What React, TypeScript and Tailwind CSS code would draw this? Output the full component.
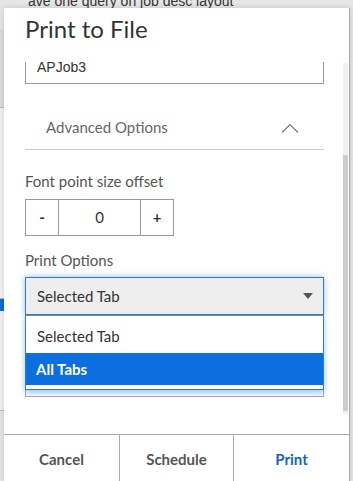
import { useEffect, useRef } from "react";

const font = "font-['Source_Sans_Pro','Lato','Noto_Sans',sans-serif]";

function Background() {
  return (
    <div className="absolute inset-0 overflow-hidden bg-[#e6e6e6]">
      <div className="-mt-[7px] pl-[28px] font-['Liberation_Sans',sans-serif] text-[14px] leading-[16px] text-[#333]">
        ave one query on job desc layout
      </div>
      <div className="mt-[20px] flex w-[4px] flex-col">
        <div className="h-[78px] bg-[#dcdcdc]" />
        <div className="h-[192px] border-y border-[#bbb] bg-[#f2f2f2]" />
        <div className="h-[12px] bg-[#0a6fde]" />
        <div className="h-[100px] border-b border-[#bbb] bg-[#f2f2f2]" />
      </div>
    </div>
  );
}

function Stepper() {
  return (
    <div className="flex h-[37px] w-[149px] border border-[#999] text-[15px] text-[#333]">
      <div className="flex w-[33px] items-center justify-center border-r border-[#999] font-bold">-</div>
      <div className="flex flex-1 items-center justify-center">0</div>
      <div className="flex w-[33px] items-center justify-center border-l border-[#999] font-bold">+</div>
    </div>
  );
}

export default function App() {
  const scrollRef = useRef<HTMLDivElement>(null);

  useEffect(() => {
    if (scrollRef.current) scrollRef.current.scrollTop = 16;
  }, []);

  return (
    <div className={`relative h-[481px] w-[353px] overflow-hidden ${font}`}>
      <Background />
      <div className="absolute left-[4px] top-[8px] flex h-[473px] w-[346px] flex-col border-r border-[#aaa] bg-white shadow-[0_0_6px_rgba(0,0,0,0.15)]">
        <div className="h-[54px] shrink-0 pl-[21px] pt-[6px] text-[24px] leading-[30px] text-[#333]">
          Print to File
        </div>

        <div className="relative flex-1">
          <div ref={scrollRef} className="absolute inset-0 overflow-hidden">
            <div className="px-[21px] pr-[25px]">
              <div className="flex h-[38px] items-center border border-[#999] px-[11px] pt-[4px] font-['Liberation_Sans',sans-serif] text-[14px] text-[#333]">
                APJob3
              </div>

              <div className="flex h-[66px] items-end justify-between border-b border-[#ccc] pb-[12px] pl-[21px] pr-[25px]">
                <span className="text-[15px] leading-[20px] text-[#666]">Advanced Options</span>
                <svg className="mb-[4px]" width="18" height="10" viewBox="0 0 18 10" fill="none" stroke="#777" strokeWidth="1.2">
                  <path d="M1 9.5 L9 1.5 L17 9.5" />
                </svg>
              </div>

              <div className="pt-[21px] text-[15px] leading-[20px] text-[#555]">Font point size offset</div>
              <div className="mt-[8px]">
                <Stepper />
              </div>

              <div className="pt-[14px] text-[15px] leading-[20px] text-[#555]">Print Options</div>
              <div className="relative mt-[7px]">
                <div className="flex h-[38px] items-center justify-between border border-[#2a7be0] bg-[#eeeeee] pl-[11px] pr-[10px] text-[15px] text-[#333] shadow-[0_0_6px_rgba(42,123,224,0.5)]">
                  <span>Selected Tab</span>
                  <svg width="10" height="6" viewBox="0 0 10 6">
                    <path d="M0 0 H10 L5 6 Z" fill="#555" />
                  </svg>
                </div>

                <div className="mt-[38px] h-[44px] border border-[#aaa]" />

                <div className="absolute inset-x-0 top-[38px] z-10 border border-t-0 border-[#2a7be0] bg-white pb-[4px] text-[15px] shadow-[0_3px_6px_rgba(42,123,224,0.45)]">
                  <div className="flex h-[38px] items-center border-t border-[#888] pl-[11px] pt-[4px] text-[#333]">Selected Tab</div>
                  <div className="flex h-[32px] items-center bg-[#0b6fe0] pl-[10px] font-bold text-white">All Tabs</div>
                </div>
              </div>
              <div className="h-[60px]" />
            </div>
          </div>

          <div className="absolute bottom-[20px] right-[1px] top-[1px] w-[5px] bg-[#f1f1f1]">
            <div className="mt-[92px] h-[256px] bg-[#cdcdcd]" />
          </div>
        </div>

        <div className="grid h-[47px] shrink-0 grid-cols-3 border-t border-[#aaa] pt-[3px] text-[15px] font-bold">
          <button className="text-[#555]">Cancel</button>
          <button className="-mt-[3px] border-x border-[#aaa] pt-[3px] text-[#555]">Schedule</button>
          <button className="text-[#1565c0]">Print</button>
        </div>
      </div>
    </div>
  );
}
